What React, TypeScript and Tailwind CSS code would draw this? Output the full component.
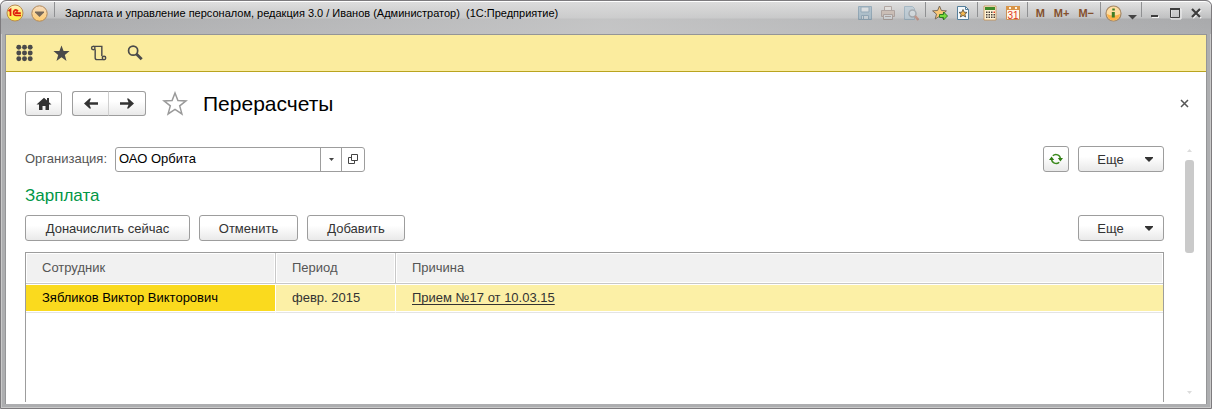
import type { ReactNode } from 'react';

const rows = [
    { employee: 'Зябликов Виктор Викторович', period: 'февр. 2015', reason: 'Прием №17 от 10.03.15' },
];

const buttonStyle =
    'flex items-center justify-center rounded-[3px] border border-[#9d9d9d] bg-gradient-to-b from-white from-40% to-[#e9e9e9] text-[#333333]';

export default function App() {
    return (
        <div className="flex min-h-screen flex-col rounded-t-md border border-[#7d7b7e] bg-[#adaeb0] font-['Liberation_Sans',Arial,sans-serif] text-[13px] text-[#333333] shadow-[inset_1px_0_0_#c9c9c9,inset_-1px_-1px_0_#c9c9c9]">
            <TitleBar />
            <div className="mx-1 mb-1 flex flex-1 flex-col border border-b-0 border-[#949597] bg-white">
                <SectionBar />
                <PageHeader />
                <div className="flex flex-1 gap-[21px] pt-[30px] pr-3 pl-[19px]">
                    <main className="flex min-w-0 flex-1 flex-col">
                        <OrganizationRow />
                        <h2 className="mt-3 mb-[7px] text-[17px] leading-6 text-[#009646]">Зарплата</h2>
                        <div className="flex gap-[9px]">
                            <TextButton className="w-[165px]">Доначислить сейчас</TextButton>
                            <TextButton className="w-[99px]">Отменить</TextButton>
                            <TextButton className="w-[98px]">Добавить</TextButton>
                            <MoreButton />
                        </div>
                        <RecalculationTable />
                    </main>
                    <ScrollBar />
                </div>
            </div>
        </div>
    );
}

function TitleBar() {
    return (
        <header className="flex h-[33px] items-start justify-between rounded-t-md border-t border-white bg-[linear-gradient(90deg,#b4b5b700,#d5d5d599_50%,#b4b5b700),linear-gradient(180deg,#e2e2e2,#bfc0c1_16px,#a9aaac_17px,#adaeb0)] pr-[7px] pl-[5px]">
            <div className="flex h-[22px] min-w-0 items-center">
                <button aria-label="Главное меню">
                    <LogoIcon />
                </button>
                <button aria-label="Меню окна" className="ml-[7px]">
                    <MenuIcon />
                </button>
                <Divider className="ml-[6px]" />
                <h1 className="ml-[10px] truncate text-[11px] text-black">
                    Зарплата и управление персоналом, редакция 3.0 / Иванов (Администратор)&nbsp; (1С:Предприятие)
                </h1>
            </div>
            <div className="flex h-[22px] shrink-0 items-center">
                <div className="flex gap-[7px] opacity-40">
                    <ToolButton label="Сохранить"><SaveIcon /></ToolButton>
                    <ToolButton label="Печать"><PrintIcon /></ToolButton>
                    <ToolButton label="Просмотр"><PreviewIcon /></ToolButton>
                </div>
                <Divider className="mx-[6px]" />
                <div className="flex gap-[7px]">
                    <ToolButton label="Добавить в избранное"><FavoriteAddIcon /></ToolButton>
                    <ToolButton label="Избранное"><FavoritePageIcon /></ToolButton>
                </div>
                <Divider className="mr-1 ml-[6px]" />
                <div className="flex gap-[7px]">
                    <ToolButton label="Калькулятор"><CalculatorIcon /></ToolButton>
                    <ToolButton label="Календарь"><CalendarIcon /></ToolButton>
                </div>
                <Divider className="mr-2 ml-[6px]" />
                <div className="flex gap-[9px] text-[11px] font-bold text-[#84502d] [text-shadow:1px_1px_0_#ececec]">
                    <button>M</button>
                    <button>M+</button>
                    <button>M−</button>
                </div>
                <Divider className="mr-1 ml-[6px]" />
                <button aria-label="О программе" className="flex items-center gap-[6px]">
                    <InfoIcon />
                    <svg width="9" height="5" viewBox="0 0 9 5" className="mt-2">
                        <path d="M0 0h9L4.500 4.500z" fill="#444" />
                    </svg>
                </button>
                <Divider className="mx-1" />
                <div className="flex gap-[5px]">
                    <ToolButton label="Свернуть">
                        <path d="M6 11h7v2H6z" fill="#f4f4f4" />
                        <path d="M5 10h7v2H5z" fill="#3d3d3d" />
                    </ToolButton>
                    <ToolButton label="Развернуть">
                        <path d="M4 4h10v10H4z" fill="none" stroke="#f4f4f4" />
                        <path d="M3.500 3.500h9v9h-9z" fill="none" stroke="#3d3d3d" />
                        <path d="M3 3h10v2H3z" fill="#3d3d3d" />
                    </ToolButton>
                    <ToolButton label="Закрыть">
                        <path d="M5 5l8 8m0-8l-8 8" stroke="#f4f4f4" strokeWidth="2" />
                        <path d="M4 4l8 8m0-8l-8 8" stroke="#3d3d3d" strokeWidth="2.200" />
                    </ToolButton>
                </div>
            </div>
        </header>
    );
}

function SectionBar() {
    return (
        <nav className="flex h-[37px] items-center gap-[18px] border-b border-[#b9a41f] bg-[#fbec9e] px-[9px]">
            <SectionButton label="Разделы">
                {[3, 9, 15].map((y) =>
                    [4, 10, 16].map((x) => <circle key={`${x}-${y}`} cx={x} cy={y} r="2.600" fill="#4a4a4a" />),
                )}
            </SectionButton>
            <SectionButton label="Избранное">
                <path d="M10 1l2.200 6H18.500l-5 4 1.800 6.300L10 13.600l-5.300 3.700L6.500 11l-5-4H7.800z" fill="#4a4a4a" />
            </SectionButton>
            <SectionButton label="История">
                <g fill="none" stroke="#4a4a4a" strokeWidth="1.500">
                    <path d="M4 2h9.500v10.500M6.500 5v9q0 2 2 2h8" />
                    <circle cx="4.500" cy="3.800" r="1.800" />
                    <circle cx="15.800" cy="14.200" r="1.800" />
                </g>
            </SectionButton>
            <SectionButton label="Поиск">
                <circle cx="7.500" cy="6.500" r="4.800" fill="none" stroke="#4a4a4a" strokeWidth="1.800" />
                <path d="M11 10l5.500 5.500" stroke="#4a4a4a" strokeWidth="3" />
            </SectionButton>
        </nav>
    );
}

function PageHeader() {
    return (
        <div className="flex items-center pt-[19px] pr-[17px] pl-[19px]">
            <button aria-label="Начальная страница" className={`h-[25px] w-[37px] ${buttonStyle}`}>
                <svg width="16" height="14" viewBox="0 0 16 14" fill="#333">
                    <path d="M8 .8l7.500 6.700H13V13H9.500V9h-3v4H3V7.500H.5zM11 1h2v4h-2z" />
                </svg>
            </button>
            <div className="ml-[10px] flex h-[25px] w-[74px]">
                <button aria-label="Назад" className={`flex-1 rounded-r-none border-r-0 ${buttonStyle}`}>
                    <ArrowIcon />
                </button>
                <button aria-label="Вперед" className={`-ml-px flex-1 rounded-l-none border-l-[#cfcfcf] ${buttonStyle}`}>
                    <ArrowIcon className="rotate-180" />
                </button>
            </div>
            <button aria-label="Добавить в избранное" className="ml-4">
                <svg width="26" height="25" viewBox="0 0 26 25">
                    <path d="M13 2l2.900 7.500 8.100.4-6.300 5 2.200 8L13 18.300 6.100 22.900l2.200-8L2 9.900l8.100-.4z" fill="white" stroke="#9a9a9a" strokeWidth="1.500" />
                </svg>
            </button>
            <h2 className="ml-[15px] text-[21px] leading-6 text-black">Перерасчеты</h2>
            <button aria-label="Закрыть" className="ml-auto">
                <svg width="9" height="9" viewBox="0 0 9 9" stroke="#555" strokeWidth="1.500">
                    <path d="M1 1l7 7m0-7L1 8" />
                </svg>
            </button>
        </div>
    );
}

function OrganizationRow() {
    return (
        <div className="flex items-center">
            <label htmlFor="organization" className="w-[90px] text-[#555555]">Организация:</label>
            <div className="flex h-[25px] w-[250px] divide-x divide-[#9d9d9d] rounded-[3px] border border-[#9d9d9d]">
                <input id="organization" defaultValue="ОАО Орбита" className="min-w-0 flex-1 px-[3px] text-black outline-none" />
                <button aria-label="Выбрать" className="flex w-[21px] items-center justify-center">
                    <svg width="5" height="3" viewBox="0 0 5 3" fill="#444"><path d="M0 0h5L2.500 3z" /></svg>
                </button>
                <button aria-label="Открыть" className="flex w-[22px] items-center justify-center">
                    <svg width="10" height="10" viewBox="0 0 10 10" fill="none" stroke="#444">
                        <path d="M3.500 .5h6v6h-6zM3 3.500H.5v6h6V7" />
                    </svg>
                </button>
            </div>
            <button aria-label="Обновить" className={`ml-auto h-[26px] w-[26px] ${buttonStyle}`}>
                <svg width="14" height="12" viewBox="0 0 14 12">
                    <path d="M3.800 2.800a4.500 4.500 0 0 1 7.600 3.200M10.200 9.200A4.500 4.500 0 0 1 2.600 6" fill="none" stroke="#3c8a1e" strokeWidth="1.500" />
                    <path d="M0 7l2.600-3.500L5.200 7zM8.800 5H14l-2.600 3.500z" fill="#2f7d12" />
                </svg>
            </button>
            <div className="ml-[9px] flex">
                <MoreButton />
            </div>
        </div>
    );
}

function RecalculationTable() {
    return (
        <div className="mt-[11px] mb-[2px] flex-1 border border-b-0 border-[#9d9d9d]">
            <table className="w-full table-fixed border-separate border-spacing-0 text-left">
                <thead>
                    <tr className="h-[31px] bg-[#f1f1f1] text-[#555555] [&>th]:border-b [&>th]:border-[#c8c8c8] [&>th]:pl-4 [&>th]:font-normal [&>th]:shadow-[inset_0_0_0_1px_white]">
                        <th className="w-[250px] border-r">Сотрудник</th>
                        <th className="w-[120px] border-r">Период</th>
                        <th>Причина</th>
                    </tr>
                </thead>
                <tbody>
                    {rows.map((row) => (
                        <tr key={row.reason} className="h-[29px] bg-[#fcf0a6] [&>td]:border-b [&>td]:border-b-[#e4e4e4] [&>td]:pl-4 [&>td]:shadow-[inset_0_1px_0_white,inset_0_-1px_0_white]">
                            <td className="border-r border-r-white bg-[#fada1e] text-black">{row.employee}</td>
                            <td className="border-r border-r-white">{row.period}</td>
                            <td><a href="#" className="underline underline-offset-2">{row.reason}</a></td>
                        </tr>
                    ))}
                </tbody>
            </table>
        </div>
    );
}

function ScrollBar() {
    return (
        <div className="flex w-[9px] flex-col items-center pt-[3px] pb-[10px]">
            <svg width="5" height="3" viewBox="0 0 5 3" fill="#dcdcdc"><path d="M0 3h5L2.500 0z" /></svg>
            <div className="mt-2 h-[93px] w-full rounded-[3px] bg-[#cacaca]" />
            <svg width="5" height="3" viewBox="0 0 5 3" fill="#dcdcdc" className="mt-auto"><path d="M0 0h5L2.500 3z" /></svg>
        </div>
    );
}

function TextButton({ className, children }: { className: string; children: ReactNode }) {
    return <button className={`h-[26px] pt-[2px] ${className} ${buttonStyle}`}>{children}</button>;
}

function MoreButton() {
    return (
        <button className={`ml-auto h-[26px] w-[86px] gap-[21px] pt-px pl-2 ${buttonStyle}`}>
            Еще
            <svg width="8" height="5" viewBox="0 0 8 5" fill="#333"><path d="M0 0h8v1L4 5 0 1z" /></svg>
        </button>
    );
}

function SectionButton({ label, children }: { label: string; children: ReactNode }) {
    return (
        <button aria-label={label}>
            <svg width="19" height="18" viewBox="0 0 20 18">{children}</svg>
        </button>
    );
}

function ToolButton({ label, children }: { label: string; children: ReactNode }) {
    return (
        <button aria-label={label}>
            <svg width="16" height="16" viewBox="0 0 16 16">{children}</svg>
        </button>
    );
}

function Divider({ className }: { className: string }) {
    return <div className={`h-[15px] w-px self-start bg-[#8f9092] ${className}`} />;
}

function ArrowIcon({ className = '' }: { className?: string }) {
    return (
        <svg width="14" height="11" viewBox="0 0 14 11" className={className}>
            <path d="M0 5.500L5.500 .5H7L5.500 4.200H14v2.600H5.500L7 10.500H5.500z" fill="#333" />
        </svg>
    );
}

function LogoIcon() {
    return (
        <svg width="18" height="18" viewBox="0 0 18 18">
            <defs>
                <linearGradient id="logo" x2="0" y2="1">
                    <stop offset="0" stopColor="#fff3c4" />
                    <stop offset="0.450" stopColor="#ffe873" />
                    <stop offset="1" stopColor="#fff23a" />
                </linearGradient>
            </defs>
            <circle cx="9" cy="9" r="8" fill="url(#logo)" stroke="#b98a50" />
            <path d="M2.500 7l2-1.500V12M12 7.200Q9.500 4.500 7.800 7.500q-.8 3.700 2.200 4H15M11.500 8.500q-1.700-1-1.700.7h5" fill="none" stroke="#e0200f" strokeWidth="1.700" />
        </svg>
    );
}

function MenuIcon() {
    return (
        <svg width="17" height="17" viewBox="0 0 17 17">
            <defs>
                <linearGradient id="menu" x2="0" y2="1">
                    <stop offset="0" stopColor="#f6dcc0" />
                    <stop offset="1" stopColor="#ffcd70" />
                </linearGradient>
            </defs>
            <circle cx="8.500" cy="8.500" r="7.700" fill="url(#menu)" stroke="#b18a5c" />
            <path d="M4 6.500h9v1L8.500 12 4 7.500z" fill="#75685a" />
        </svg>
    );
}

function SaveIcon() {
    return (
        <g fill="none" stroke="#3d6f91">
            <path d="M1.500 1.500h13v13h-13z" fill="#7fa9c4" />
            <path d="M4 2h8v5H4z" fill="#e5edf2" />
            <path d="M4.500 10.500h7v4h-7z" fill="#c5d6e0" />
            <path d="M6.500 11v3" />
        </g>
    );
}

function PrintIcon() {
    return (
        <g stroke="#7c6258">
            <path d="M4.500 1.500h7v4h-7z" fill="#f4eee8" />
            <path d="M1.500 5.500h13v6h-13z" fill="#c6a692" />
            <path d="M3.500 9.500h9v5h-9z" fill="#d8e0e6" />
            <path d="M5 11.500h6" />
        </g>
    );
}

function PreviewIcon() {
    return (
        <g fill="none">
            <path d="M1.500 1.500h8l2 2v11h-10z" fill="#a9c8dc" stroke="#5f8ba8" />
            <circle cx="9.500" cy="8.500" r="3.500" fill="#dae8f0" stroke="#677580" strokeWidth="1.500" />
            <path d="M12 11l3.500 4" stroke="#b74c2c" strokeWidth="2.500" />
        </g>
    );
}

function FavoriteAddIcon() {
    return (
        <>
            <path d="M7.500 1l1.900 4.500 5 .4-3.900 3.200 1.300 4.900-4.300-2.700L3.200 14l1.300-4.900L.6 5.900l5-.4z" fill="#f9c878" stroke="#7a6a58" />
            <path d="M7.500 9.500h4v-2.500l4 4-4 4v-2.500h-4z" fill="#78dc3c" stroke="#2f7d20" />
        </>
    );
}

function FavoritePageIcon() {
    return (
        <>
            <path d="M2.500 1.500h8l3 3v10h-11z" fill="#f4f9fc" stroke="#547e9b" />
            <path d="M10.500 1.500v3h3" fill="none" stroke="#547e9b" />
            <path d="M8 4.500l1.200 2.700 2.800.2L9.900 9.200l.7 2.800L8 10.400 5.400 12l.7-2.800L4 7.400l2.800-.2z" fill="#f5b74f" stroke="#51473a" strokeWidth=".8" />
        </>
    );
}

function CalculatorIcon() {
    return (
        <>
            <path d="M2 1h12v14H2z" fill="#fff3d6" stroke="#c48f50" strokeWidth=".8" />
            <path d="M3 2h10v3H3z" fill="#3f8a28" />
            {[6.5, 9, 11.5].map((y) =>
                [4, 6.5, 9].map((x) => <rect key={`${x}-${y}`} x={x} y={y} width="1.500" height="1.500" fill="#4b4038" />),
            )}
            <path d="M11.500 6.500H13V8h-1.500z" fill="#e23b22" />
            <path d="M11.500 9H13v1.500h-1.500zM11.500 11.500H13V13h-1.500z" fill="#4b4038" />
        </>
    );
}

function CalendarIcon() {
    return (
        <>
            <path d="M1.500 1.500h13v13h-13z" fill="#fff7e6" stroke="#c89058" />
            <path d="M1 1h14v4H1z" fill="#d99549" />
            <path d="M4 2h2v2H4zM10 2h2v2h-2z" fill="#fff3dd" />
            <text x="8" y="13.500" textAnchor="middle" fontSize="10" fill="#e0341c">31</text>
        </>
    );
}

function InfoIcon() {
    return (
        <svg width="17" height="17" viewBox="0 0 17 17">
            <circle cx="8.500" cy="8.500" r="7.500" fill="#ffdda0" stroke="#a58865" strokeWidth="1.200" />
            <path d="M2 9q6.500 3 13 0a6.500 6.500 0 0 1-13 0z" fill="#fdb347" />
            <path d="M7.300 3.500h2.500v2H7.300zM6.800 7h3v5.500h-3z" fill="#3f7d25" />
        </svg>
    );
}
